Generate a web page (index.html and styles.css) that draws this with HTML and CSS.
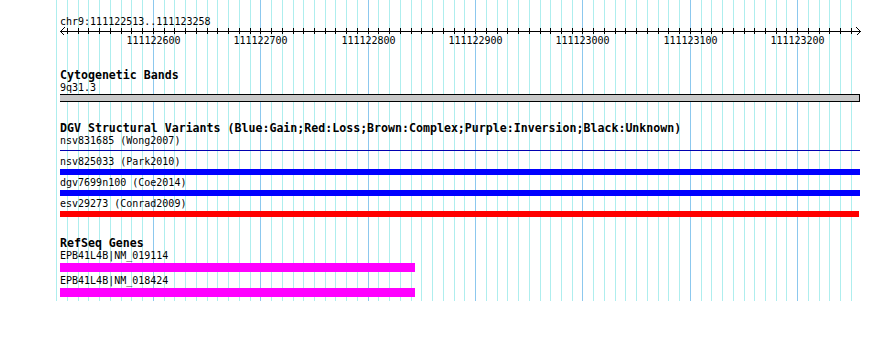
FILE: index.html
```html
<!DOCTYPE html>
<html>
<head>
	<title>Region chr9:111122513..111123258</title>
	<link rel="stylesheet" href="styles.css">
</head>
<body>
<div id="browser">
	<svg id="grid" width="890" height="301"></svg>
	<div id="tracks">
		<div class="coord">chr9:111122513..111123258</div>
		<svg id="ruler" width="890" height="22"></svg>

		<div class="track cyto">
			<div class="track-title">Cytogenetic Bands</div>
			<div class="label">9q31.3</div>
			<div class="band"></div>
		</div>

		<div class="track dgv">
			<div class="track-title">DGV Structural Variants (Blue:Gain;Red:Loss;Brown:Complex;Purple:Inversion;Black:Unknown)</div>
			<div class="label">nsv831685 (Wong2007)</div>
			<div class="bar thin"></div>
			<div class="label">nsv825033 (Park2010)</div>
			<div class="bar gain"></div>
			<div class="label">dgv7699n100 (Coe2014)</div>
			<div class="bar gain"></div>
			<div class="label">esv29273 (Conrad2009)</div>
			<div class="bar loss"></div>
		</div>

		<div class="track genes">
			<div class="track-title">RefSeq Genes</div>
			<div class="label">EPB41L4B|NM_019114</div>
			<div class="bar gene"></div>
			<div class="label">EPB41L4B|NM_018424</div>
			<div class="bar gene"></div>
		</div>
	</div>
</div>
<script type="text/javascript">

var svgNS = "http://www.w3.org/2000/svg";
var start = 111122513, end = 111123258;
var left = 60, span = 800;

function xPos(bp){
	return left + (bp - start) * span / (end - start);
}

function add(parent, name, attrs, text){
	var el = document.createElementNS(svgNS, name);
	for(var k in attrs){ el.setAttribute(k, attrs[k]); }
	if(text){ el.textContent = text; }
	parent.appendChild(el);
	return el;
}

// vertical grid, one line every 10bp
var grid = document.querySelector("#grid");
for(var bp = 111122510; bp <= 111123250; bp += 10){
	var x = Math.floor(xPos(bp)) + 0.5;
	add(grid, "line", {x1: x, y1: 0, x2: x, y2: 301,
		"class": (bp % 100 === 0) ? "major" : "minor"});
}

// ruler
var ruler = document.querySelector("#ruler");
add(ruler, "line", {x1: 60, y1: 5.5, x2: 861, y2: 5.5, "class": "axis"});
add(ruler, "path", {d: "M64.5 1.5 L60.5 5.5 L64.5 9.5", "class": "axis"});
add(ruler, "path", {d: "M856.5 1.5 L860.5 5.5 L856.5 9.5", "class": "axis"});
for(var bp = 111122520; bp <= 111123250; bp += 10){
	var x = Math.floor(xPos(bp)) + 0.5;
	add(ruler, "line", {x1: x, y1: 2, x2: x, y2: 8, "class": "axis"});
	if(bp % 100 === 0){
		add(ruler, "text", {x: x, y: 18, "text-anchor": "middle"}, String(bp));
	}
}

</script>
</body>
</html>
```

FILE: styles.css
```css
body{
	margin: 0;
	background: #ffffff;
	color: #000000;
	font-family: "DejaVu Sans Mono", monospace;
	font-size: 10px;
}

#browser{
	position: relative;
	width: 890px;
	height: 349px;
}

#grid{
	position: absolute;
	top: 0;
	left: 0;
}

#grid line{
	stroke-width: 1;
	shape-rendering: crispEdges;
}
#grid .minor{ stroke: #aeeeee; }
#grid .major{ stroke: #8cc8ee; }

#tracks{
	position: relative;
}

.coord{
	height: 10px;
	padding: 16px 0 0 60px;
	line-height: 12px;
	white-space: nowrap;
}

#ruler{
	display: block;
}
#ruler .axis{
	stroke: #000000;
	stroke-width: 1;
	fill: none;
	shape-rendering: crispEdges;
}
#ruler text{
	font-family: "DejaVu Sans Mono", monospace;
	font-size: 10px;
	fill: #000000;
}

.track-title{
	padding-left: 60px;
	font-size: 11.6px;
	font-weight: bold;
	line-height: 13px;
	white-space: nowrap;
}

.label{
	padding-left: 60px;
	height: 12px;
	line-height: 12px;
	white-space: nowrap;
}

.cyto{ margin-top: 21px; }
.dgv{ margin-top: 20px; }
.genes{ margin-top: 20px; }

.band{
	margin-left: 60px;
	width: 799px;
	height: 6px;
	border: 1px solid #000000;
	border-left: none;
	background: #c8c8c8;
}

.bar{
	margin: 1px 0 2px 60px;
	width: 800px;
	height: 6px;
}
.bar.thin{
	margin: 3px 0 5px 60px;
	height: 1px;
	background: #0000b0;
}
.bar.gain{ background: #0000ff; }
.bar.loss{ background: #ff0000; width: 799px; }
.bar.gene{
	margin: 1px 0 3px 60px;
	width: 355px;
	height: 9px;
	background: #ff00ff;
}
```
